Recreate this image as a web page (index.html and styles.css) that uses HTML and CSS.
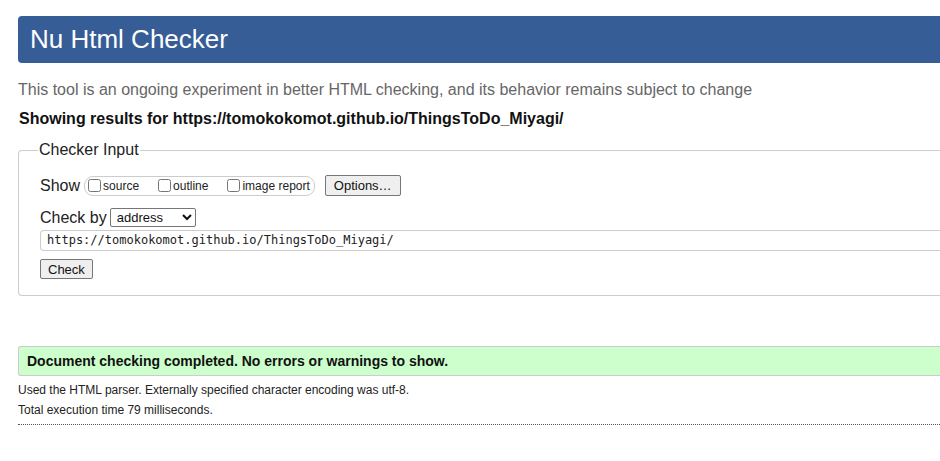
FILE: index.html
```html
<!DOCTYPE html>
<html lang="en">
<head>
<meta charset="utf-8">
<title>Nu Html Checker</title>
<link rel="stylesheet" href="styles.css">
</head>
<body>
<div class="page">
  <h1 class="title">Nu Html Checker</h1>
  <p class="intro">This tool is an ongoing experiment in better HTML checking, and its behavior remains subject to change</p>
  <p class="results-for">Showing results for https://tomokokomot.github.io/ThingsToDo_Miyagi/</p>
  <fieldset class="checker">
    <legend class="legend">Checker Input</legend>
    <div class="row show-row">
      <span class="label">Show</span>
      <span class="show-group">
        <label class="opt"><input type="checkbox" class="cb">source</label>
        <label class="opt"><input type="checkbox" class="cb">outline</label>
        <label class="opt"><input type="checkbox" class="cb">image report</label>
      </span>
      <button class="btn options">Options…</button>
    </div>
    <div class="row checkby-row">
      <span class="label">Check by</span>
      <select class="sel"><option>address</option></select>
    </div>
    <div class="url">https://tomokokomot.github.io/ThingsToDo_Miyagi/</div>
    <button class="btn check">Check</button>
  </fieldset>
  <div class="success">Document checking completed. No errors or warnings to show.</div>
  <p class="meta">Used the HTML parser. Externally specified character encoding was utf-8.</p>
  <p class="meta">Total execution time 79 milliseconds.</p>
  <hr class="rule">
</div>
</body>
</html>
```
FILE: styles.css
```css
html, body {
  margin: 0;
  padding: 0;
  background: #fff;
  overflow: hidden;
}
body {
  font-family: "Liberation Sans", Arial, sans-serif;
  color: #222;
}
.page {
  width: 1000px;
  padding: 16px 0 0 18px;
}
.title {
  margin: 0;
  height: 47px;
  box-sizing: border-box;
  background: #365d95;
  color: #fff;
  font-weight: normal;
  font-size: 26px;
  line-height: 47px;
  padding-left: 12px;
  border-radius: 4px 0 0 4px;
}
.intro {
  margin: 17px 0 0 0;
  font-size: 16px;
  color: #666;
  line-height: 20px;
}
.results-for {
  margin: 9px 0 0 1px;
  font-size: 16px;
  font-weight: bold;
  color: #111;
  line-height: 20px;
}
.checker {
  margin: 12px 0 0 0;
  border: 1px solid #ccc;
  border-right: none;
  border-radius: 4px 0 0 4px;
  padding: 16px 0 16px 21px;
}
.legend {
  font-size: 16px;
  color: #222;
  padding: 0 1px;
  margin-left: -2px;
}
.row {
  display: flex;
  align-items: center;
}
.label {
  font-size: 16px;
  color: #222;
}
.show-group {
  display: inline-flex;
  align-items: center;
  margin-left: 4px;
  height: 18px;
  border: 1px solid #ccc;
  border-radius: 9px;
  padding: 0 4px 0 3px;
  gap: 19px;
}
.opt {
  display: inline-flex;
  align-items: center;
  font-size: 12px;
  color: #222;
}
.cb {
  margin: 0 2px 0 0;
  width: 13px;
  height: 13px;
}
.btn {
  font-family: "Liberation Sans", Arial, sans-serif;
  font-size: 13px;
  color: #111;
  background: #efefef;
  border: 1px solid #767676;
  border-radius: 2px;
  padding: 0 6px;
  height: 21px;
}
.options {
  margin-left: 10px;
  padding: 0 8px;
}
.checkby-row {
  margin-top: 12px;
}
.sel {
  margin-left: 3px;
  font-family: "Liberation Sans", Arial, sans-serif;
  font-size: 13px;
  height: 19px;
  width: 86px;
  border: 1px solid #767676;
  border-radius: 2px;
  background: #fff;
  color: #111;
  padding: 0 0 0 2px;
}
.url {
  margin-top: 3px;
  height: 21px;
  box-sizing: border-box;
  border: 1px solid #ccc;
  border-right: none;
  border-radius: 4px 0 0 4px;
  padding-left: 6px;
  font-family: "DejaVu Sans Mono", "Liberation Mono", monospace;
  font-size: 12px;
  line-height: 19px;
  color: #222;
}
.check {
  margin-top: 8px;
  height: 20px;
  padding: 0 7px;
}
.success {
  margin-top: 50px;
  height: 30px;
  box-sizing: border-box;
  background: #ccffcc;
  border: 1px solid #ccc;
  border-right: none;
  border-radius: 3px 0 0 3px;
  padding-left: 8px;
  font-size: 14px;
  font-weight: bold;
  line-height: 28px;
  color: #111;
}
.meta {
  margin: 7px 0 0 0;
  font-size: 12px;
  line-height: 15px;
  color: #222;
}
.meta + .meta {
  margin-top: 5px;
}
.rule {
  margin: 6px 0 0 0;
  border: none;
  border-top: 1px dotted #555;
  height: 0;
}
```
